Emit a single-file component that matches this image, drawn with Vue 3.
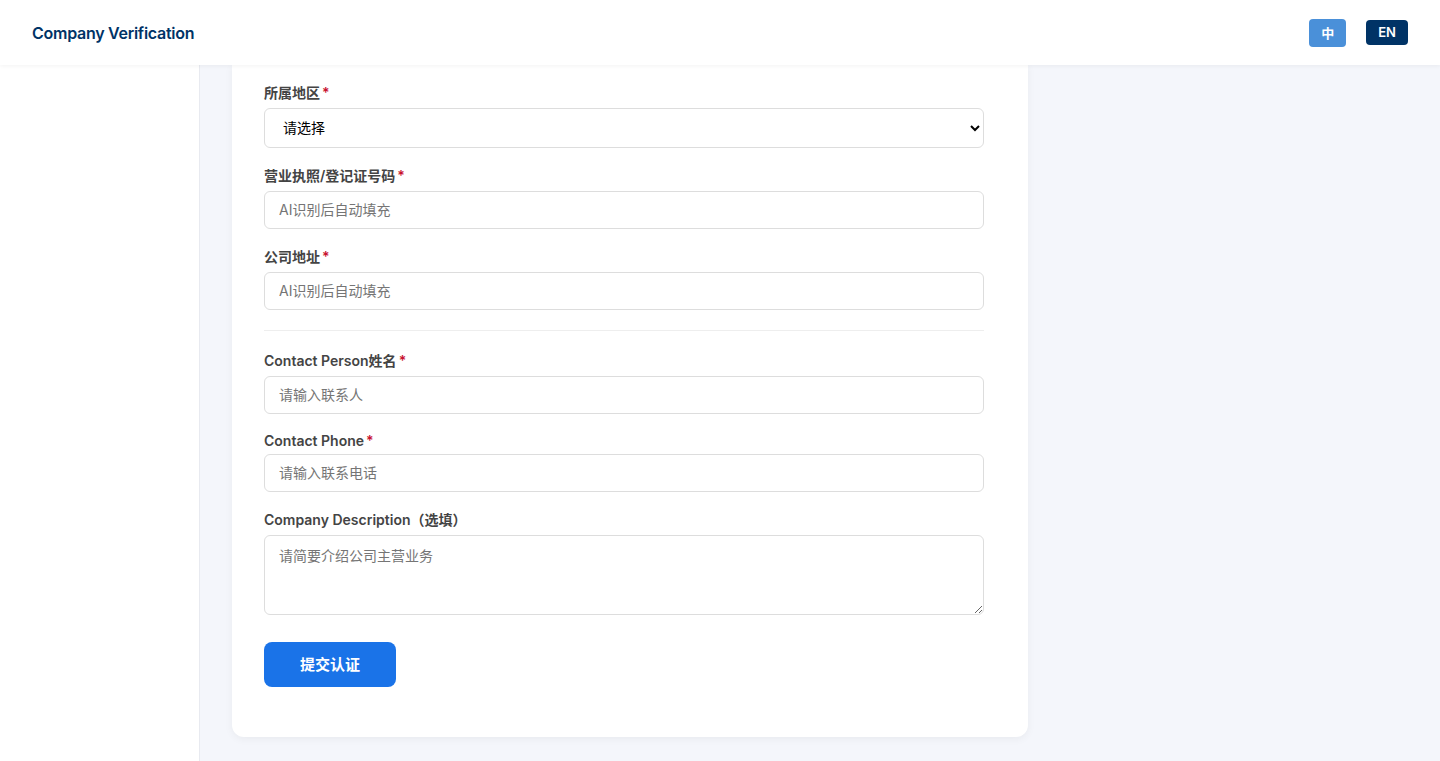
<script setup>
const fieldsA = [
  { label: '营业执照/登记证号码', placeholder: 'AI识别后自动填充' },
  { label: '公司地址', placeholder: 'AI识别后自动填充' }
]
const fieldsB = [
  { label: 'Contact Person姓名', placeholder: '请输入联系人', latin: false },
  { label: 'Contact Phone', placeholder: '请输入联系电话', latin: true }
]
</script>

<template>
  <div class="page">
    <header class="topbar">
      <div class="title">Company Verification</div>
      <div class="langs">
        <button class="lang zh" type="button">中</button>
        <button class="lang en" type="button">EN</button>
      </div>
    </header>
    <div class="body">
      <aside class="sidebar"></aside>
      <main class="main">
        <section class="card">
          <form class="form" @submit.prevent>
            <div class="group">
              <label class="label">所属地区<span class="req">*</span></label>
              <select class="control select">
                <option>请选择</option>
              </select>
            </div>
            <div v-for="f in fieldsA" :key="f.label" class="group">
              <label class="label">{{ f.label }}<span class="req">*</span></label>
              <input class="control input" type="text" :placeholder="f.placeholder" />
            </div>
            <hr class="divider" />
            <div v-for="f in fieldsB" :key="f.label" class="group">
              <label class="label" :class="{ latin: f.latin }">{{ f.label }}<span class="req">*</span></label>
              <input class="control input" type="text" :placeholder="f.placeholder" />
            </div>
            <div class="group">
              <label class="label">Company Description（选填）</label>
              <textarea class="control textarea" placeholder="请简要介绍公司主营业务"></textarea>
            </div>
            <button class="submit" type="submit">提交认证</button>
          </form>
        </section>
      </main>
    </div>
  </div>
</template>

<style>
html, body { margin: 0; padding: 0; background: #f4f6fb; }
</style>

<style scoped>
.page {
  min-height: 761px;
  display: flex;
  flex-direction: column;
  font-family: Inter, "Noto Sans CJK SC", sans-serif;
  background: #f4f6fb;
  box-sizing: border-box;
}
.topbar {
  height: 65px;
  box-sizing: border-box;
  padding: 0 32px;
  display: flex;
  align-items: center;
  justify-content: space-between;
  background: #fff;
  box-shadow: 0 1px 4px rgba(0, 0, 0, 0.05);
  position: relative;
  z-index: 2;
}
.title {
  font-size: 16px;
  font-weight: 600;
  letter-spacing: -0.27px;
  color: #003366;
}
.langs {
  display: flex;
  align-items: center;
  gap: 20px;
}
.lang {
  font-family: inherit;
  font-size: 13px;
  font-weight: 600;
  color: #fff;
  border: none;
  border-radius: 4px;
  padding: 4px 12px 5px;
}
.zh { background: #4a90d9; }
.en { background: #003366; }
.body {
  flex: 1;
  display: flex;
}
.sidebar {
  width: 200px;
  box-sizing: border-box;
  background: #fff;
  border-right: 1px solid #e8eaf0;
}
.main {
  flex: 1;
  padding: 0 32px 24px;
}
.card {
  width: 796px;
  box-sizing: border-box;
  background: #fff;
  border-radius: 0 0 12px 12px;
  box-shadow: 0 2px 8px rgba(0, 0, 0, 0.05);
  padding: 17px 44px 50px 32px;
}
.group {
  margin-bottom: 17px;
}
.label {
  display: block;
  margin-bottom: 6px;
  font-size: 14px;
  font-weight: 600;
  color: #444;
}
.label.latin {
  padding-top: 1px;
  margin-bottom: 5px;
}
.req {
  color: #c8102e;
  margin-left: 2px;
}
.control {
  display: block;
  width: 100%;
  box-sizing: border-box;
  border: 1px solid #ddd;
  border-radius: 6px;
  background: #fff;
  font-family: inherit;
  font-size: 14px;
  color: #000;
  outline: none;
}
.control::placeholder {
  color: #757575;
}
.select {
  height: 40px;
  padding: 0 14px 2px;
}
.input {
  height: 38px;
  padding: 0 14px 2px;
}
.textarea {
  height: 80px;
  padding: 9px 14px;
  resize: vertical;
}
.divider {
  border: none;
  border-top: 1px solid #eee;
  margin: 20px 0 19px;
}
.submit {
  display: block;
  margin-top: 27px;
  width: 132px;
  height: 45px;
  border: none;
  border-radius: 8px;
  background: #1a73e8;
  color: #fff;
  font-family: inherit;
  font-size: 15px;
  font-weight: 600;
  padding: 0 0 3px;
}
</style>
